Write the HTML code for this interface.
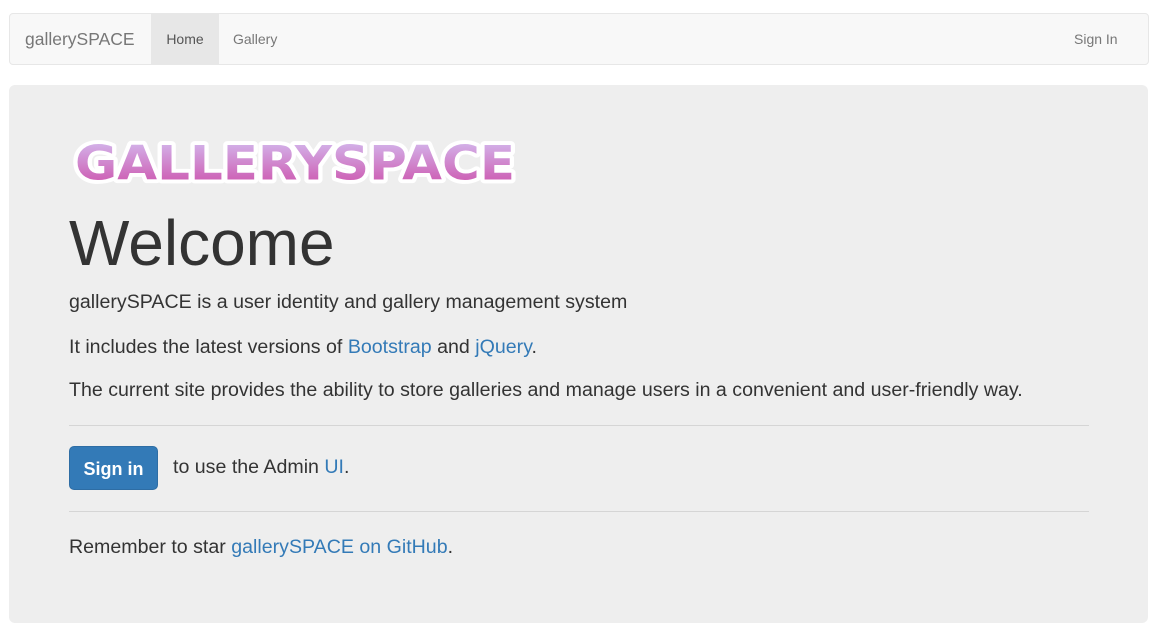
<!DOCTYPE html>
<html><head><style>
body{margin:0;width:1168px;height:639px;background:#fff;font-family:"Liberation Sans",sans-serif;color:#333;position:relative;overflow:hidden}
.nav{position:absolute;left:9px;top:13px;width:1138px;height:50px;background:#f8f8f8;border:1px solid #e7e7e7;border-radius:4px}
.nav span{position:absolute;top:0;line-height:50px;font-size:14px;color:#777}
.brand{left:15px;font-size:17.5px!important}
.home{left:141px;width:68px;text-align:center;background:#e7e7e7;color:#555!important}
.jum{position:absolute;left:9px;top:85px;width:1139px;height:538px;background:#eee;border-radius:6px}
.t{position:absolute;left:60px;font-size:19.6px;font-weight:300;white-space:nowrap}
a{color:#337ab7;text-decoration:none}
hr{position:absolute;left:60px;width:1020px;margin:0;border:0;border-top:1px solid #d5d5d5}
.btn{position:absolute;left:60px;top:361px;width:89px;height:44px;background:#337ab7;border:1px solid #2e6da4;border-radius:5px;color:#fff;font-weight:bold;font-size:18px;line-height:44px;text-align:center;box-sizing:border-box}
</style></head><body>
<div class="nav"><span class="brand">gallerySPACE</span><span class="home">Home</span><span style="left:223px">Gallery</span><span style="left:1064px">Sign In</span></div>
<div class="jum">
<svg style="position:absolute;left:58px;top:41px" width="460" height="62">
<defs><linearGradient id="g" x1="0" y1="0" x2="0" y2="1"><stop offset="0" stop-color="#d4c0f2"/><stop offset="1" stop-color="#cc4ca8"/></linearGradient></defs>
<text x="8" y="53" font-family="DejaVu Sans" font-weight="bold" font-size="60" textLength="440" lengthAdjust="spacingAndGlyphs" fill="url(#g)" stroke="#fff" stroke-width="10" stroke-linejoin="round" paint-order="stroke" transform="translate(0,12) scale(1,0.78)">GALLERYSPACE</text>
</svg>
<div class="t" style="top:121px;font-size:64px;font-weight:500">Welcome</div>
<div class="t" style="top:206px">gallerySPACE is a user identity and gallery management system</div>
<div class="t" style="top:251px">It includes the latest versions of <a>Bootstrap</a> and <a>jQuery</a>.</div>
<div class="t" style="top:294px">The current site provides the ability to store galleries and manage users in a convenient and user-friendly way.</div>
<hr style="top:340px">
<div class="btn">Sign in</div>
<div class="t" style="left:164px;top:371px">to use the Admin <a>UI</a>.</div>
<hr style="top:426px">
<div class="t" style="top:451px">Remember to star <a>gallerySPACE on GitHub</a>.</div>
</div>
</body></html>
